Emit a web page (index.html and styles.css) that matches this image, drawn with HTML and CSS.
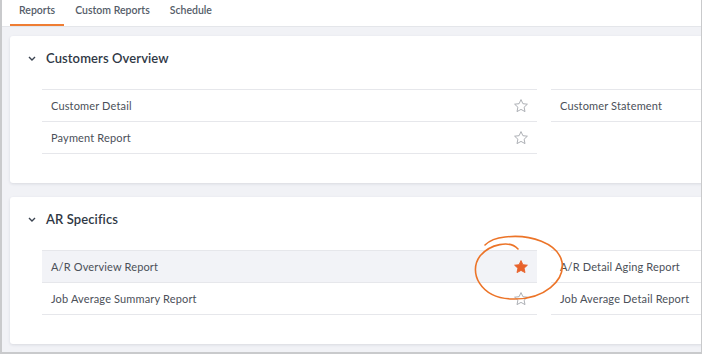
FILE: index.html
```html
<!DOCTYPE html>
<html lang="en">
<head>
    <meta charset="UTF-8">
    <title>Reports</title>
    <link rel="stylesheet" href="styles.css">
</head>
<body>
    <div class="frame">
        <nav class="tabs">
            <a class="tab active">Reports</a>
            <a class="tab">Custom Reports</a>
            <a class="tab">Schedule</a>
        </nav>

        <main class="content">
            <section class="card">
                <div class="card-head">
                    <svg class="chevron" width="8" height="5" viewBox="0 0 8 5"><path d="M1 1l3 3 3-3" fill="none" stroke="#3a4350" stroke-width="1.4"/></svg>
                    <h2>Customers Overview</h2>
                </div>
                <div class="report-grid">
                    <ul class="report-list">
                        <li class="report">Customer Detail <svg class="star" viewBox="0 0 16 16"><path d="M8 1.6l1.9 4.1 4.5.5-3.3 3 .9 4.4L8 11.4l-4 2.2.9-4.4-3.3-3 4.5-.5z"/></svg></li>
                        <li class="report">Payment Report <svg class="star" viewBox="0 0 16 16"><path d="M8 1.6l1.9 4.1 4.5.5-3.3 3 .9 4.4L8 11.4l-4 2.2.9-4.4-3.3-3 4.5-.5z"/></svg></li>
                    </ul>
                    <ul class="report-list">
                        <li class="report">Customer Statement</li>
                    </ul>
                </div>
            </section>

            <section class="card">
                <div class="card-head">
                    <svg class="chevron" width="8" height="5" viewBox="0 0 8 5"><path d="M1 1l3 3 3-3" fill="none" stroke="#3a4350" stroke-width="1.4"/></svg>
                    <h2>AR Specifics</h2>
                </div>
                <div class="report-grid">
                    <ul class="report-list">
                        <li class="report hover">A/R Overview Report <svg class="star fav" viewBox="0 0 16 16"><path d="M8 1.6l1.9 4.1 4.5.5-3.3 3 .9 4.4L8 11.4l-4 2.2.9-4.4-3.3-3 4.5-.5z"/></svg></li>
                        <li class="report">Job Average Summary Report <svg class="star" viewBox="0 0 16 16"><path d="M8 1.6l1.9 4.1 4.5.5-3.3 3 .9 4.4L8 11.4l-4 2.2.9-4.4-3.3-3 4.5-.5z"/></svg></li>
                    </ul>
                    <ul class="report-list">
                        <li class="report">A/R Detail Aging Report</li>
                        <li class="report">Job Average Detail Report</li>
                    </ul>
                </div>
            </section>
        </main>

        <!-- hand drawn highlight round the favourite star -->
        <svg class="scribble" width="100" height="74" viewBox="0 0 100 74">
            <path d="M50 17 C42 8, 22 12, 12 24 C0 40, 12 66, 44 67 C77 68, 97 48, 94 30 C90 11, 62 2, 37 5 C27 6, 20 10, 17 13" fill="none" stroke="#ec7428" stroke-width="1.6" stroke-linecap="round"/>
        </svg>
    </div>
</body>
</html>
```

FILE: styles.css
```css
* {
    box-sizing: border-box;
}
body {
    margin: 0;
    font-family: 'Lato', 'Open Sans', sans-serif;
    color: #4b5059;
}
.frame {
    position: relative;
    width: 702px;
    height: 354px;
    overflow: hidden;
    background-color: #f1f2f6;
    border-left: 2px solid #c9cacc;
    border-right: 1px solid #c9cacc;
    border-bottom: 2px solid #c9cacc;
}
.tabs {
    display: flex;
    height: 27px;
    padding-left: 8px;
    background-color: white;
    border-bottom: 1px solid #e4e6ea;
}
.tab {
    display: flex;
    align-items: center;
    padding: 0 9px 4px;
    margin-right: 2px;
    font-size: 10.5px;
    font-weight: 600;
    color: #545c68;
    border-bottom: 2px solid transparent;
}
.tab.active {
    border-bottom-color: #ef7d33;
}
.content {
    display: flex;
    flex-direction: column;
    gap: 14px;
    padding: 9px 0 0 8px;
}
.card {
    width: 1100px;
    padding: 12px 0 29px 0;
    background-color: white;
    border-radius: 3px;
    box-shadow: 0 1px 3px rgba(40, 50, 70, 0.12);
}
.card-head {
    display: flex;
    align-items: center;
    gap: 10px;
    height: 20px;
    padding-left: 18px;
    margin-bottom: 21px;
}
.card-head h2 {
    margin: 0;
    font-size: 13px;
    font-weight: 600;
    letter-spacing: 0.1px;
    color: #2f3845;
}
.report-grid {
    display: grid;
    grid-template-columns: 495px 495px;
    gap: 14px;
    padding-left: 32px;
}
.report-list {
    list-style: none;
    margin: 0;
    padding: 0;
    border-top: 1px solid #e6e7eb;
}
.report {
    display: flex;
    align-items: center;
    justify-content: space-between;
    height: 32px;
    padding: 0 8px 0 9px;
    font-size: 11px;
    letter-spacing: 0.15px;
    border-bottom: 1px solid #e6e7eb;
}
.report.hover {
    background-color: #f2f3f7;
}
.star {
    width: 16px;
    height: 16px;
    fill: none;
    stroke: #a4a7ad;
    stroke-width: 0.9;
    stroke-linejoin: round;
}
.star.fav {
    fill: #e8622a;
    stroke: #e8622a;
}
.scribble {
    position: absolute;
    left: 466px;
    top: 232px;
}
```
